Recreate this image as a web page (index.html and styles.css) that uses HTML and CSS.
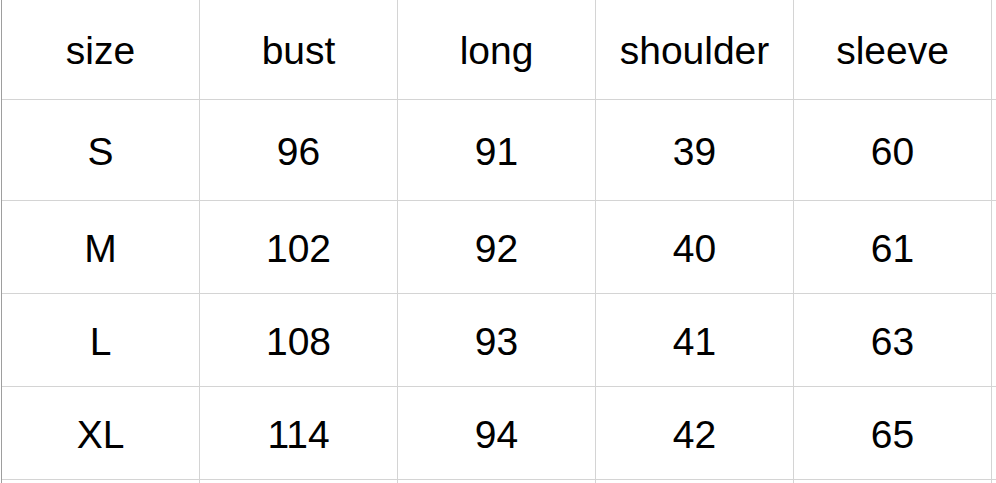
FILE: index.html
```html
<!DOCTYPE html>
<html>
<head>
<meta charset="utf-8">
<link rel="stylesheet" href="styles.css">
</head>
<body>
<div class="sheet">
  <div class="row head">
    <div class="cell">size</div><div class="cell">bust</div><div class="cell">long</div><div class="cell">shoulder</div><div class="cell">sleeve</div><div class="cell edge"></div>
  </div>
  <div class="row first">
    <div class="cell">S</div><div class="cell">96</div><div class="cell">91</div><div class="cell">39</div><div class="cell">60</div><div class="cell edge"></div>
  </div>
  <div class="row">
    <div class="cell">M</div><div class="cell">102</div><div class="cell">92</div><div class="cell">40</div><div class="cell">61</div><div class="cell edge"></div>
  </div>
  <div class="row">
    <div class="cell">L</div><div class="cell">108</div><div class="cell">93</div><div class="cell">41</div><div class="cell">63</div><div class="cell edge"></div>
  </div>
  <div class="row">
    <div class="cell">XL</div><div class="cell">114</div><div class="cell">94</div><div class="cell">42</div><div class="cell">65</div><div class="cell edge"></div>
  </div>
  <div class="row tail">
    <div class="cell"></div><div class="cell"></div><div class="cell"></div><div class="cell"></div><div class="cell"></div><div class="cell edge"></div>
  </div>
</div>
</body>
</html>
```
FILE: styles.css
```css
html, body {
  margin: 0;
  padding: 0;
  background: #ffffff;
  overflow: hidden;
}
body {
  width: 996px;
  height: 483px;
}
.sheet {
  margin-left: 1px;
  border-left: 1px solid #9e9e9e;
  display: flex;
  flex-direction: column;
  font-family: "Liberation Sans", Arial, sans-serif;
  font-size: 39px;
  color: #000;
}
.row {
  display: flex;
  height: 93px;
}
.row.head { height: 100px; }
.row.first { height: 101px; }
.row.tail { height: 20px; }
.cell {
  box-sizing: border-box;
  width: 198px;
  flex: none;
  border-right: 1px solid #d4d4d4;
  border-bottom: 1px solid #d4d4d4;
  display: flex;
  align-items: center;
  justify-content: center;
  padding-top: 3px;
}
.cell.edge {
  width: 20px;
}
```
